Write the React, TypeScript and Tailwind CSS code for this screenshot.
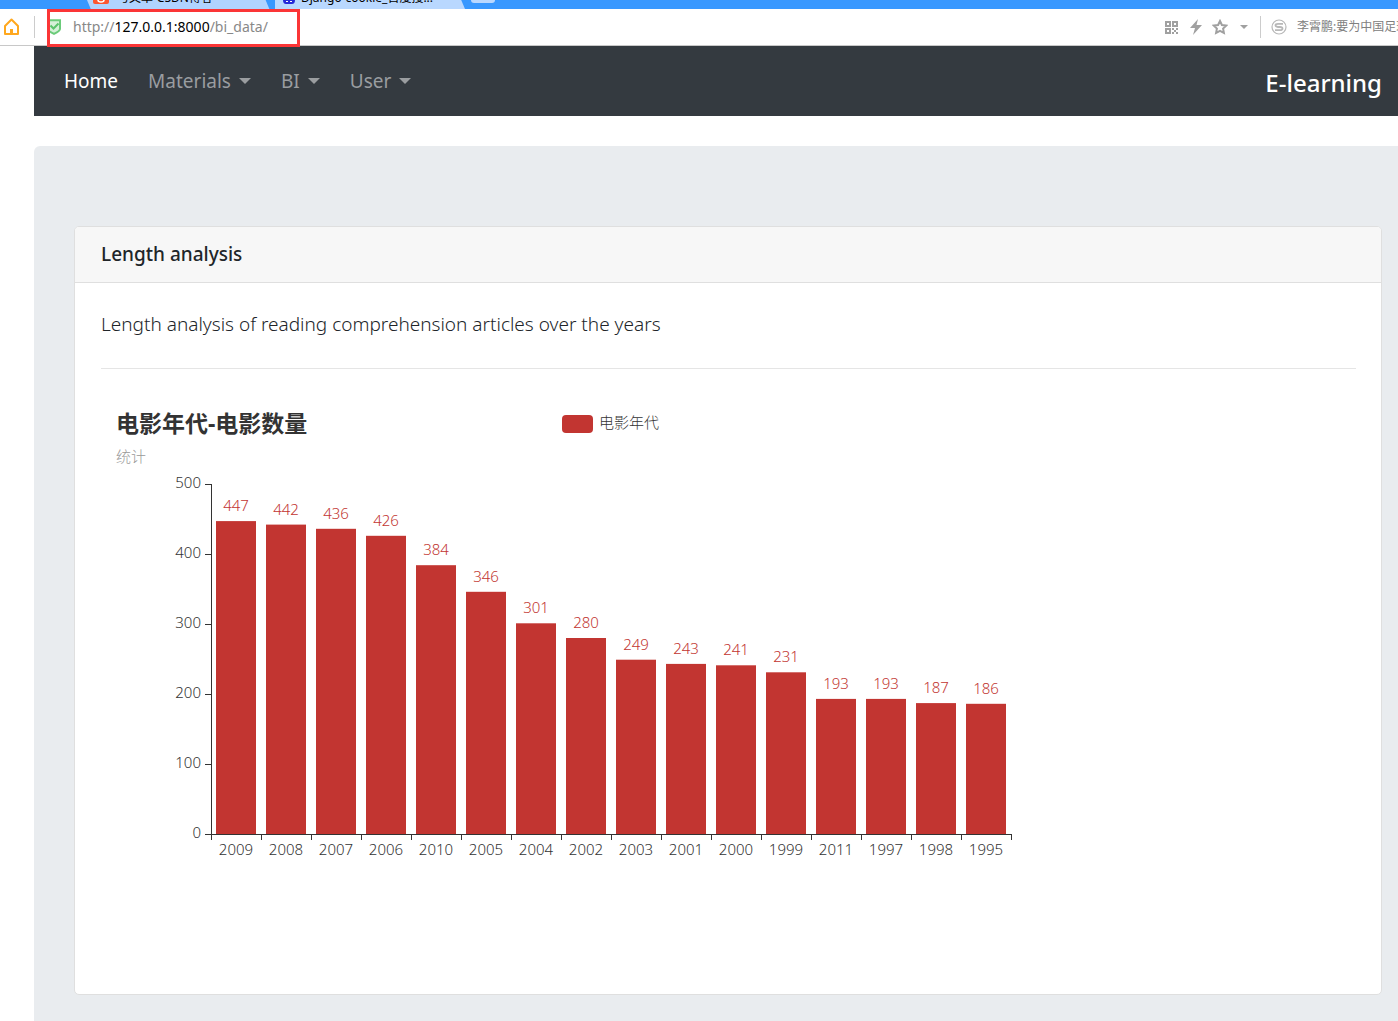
import { useId } from 'react'

const films = [
  { year: '2009', count: 447 },
  { year: '2008', count: 442 },
  { year: '2007', count: 436 },
  { year: '2006', count: 426 },
  { year: '2010', count: 384 },
  { year: '2005', count: 346 },
  { year: '2004', count: 301 },
  { year: '2002', count: 280 },
  { year: '2003', count: 249 },
  { year: '2001', count: 243 },
  { year: '2000', count: 241 },
  { year: '1999', count: 231 },
  { year: '2011', count: 193 },
  { year: '1997', count: 193 },
  { year: '1998', count: 187 },
  { year: '1995', count: 186 },
]

const ticks = [0, 100, 200, 300, 400, 500]

// plot area inside the 1000x500 chart
const left = 100
const bottom = 425
const step = 50
const scale = 0.7

const TabStrip = () => (
  <div className="flex h-[9px] overflow-hidden bg-[#3898ff] pl-[87px] text-xs leading-4">
    <button className="flex h-[9px] w-[188px] items-start gap-2 overflow-hidden bg-[#b0d3ff] pl-1.5 text-black [clip-path:polygon(0_0,95%_0,97%_100%,2%_100%)]">
      <svg className="h-[5px] w-4 shrink-0" viewBox="0 0 16 5">
        <path d="M0 0h16v2q0 2-2 2H2Q0 4 0 2z" fill="#fc5531" />
        <path d="M5 0q0 2 3 2t3-2" fill="none" stroke="#fff" strokeWidth="1.5" />
      </svg>
      <span className="-mt-2.5">与文章-CSDN博客</span>
    </button>
    <button className="flex h-[9px] w-[190px] items-start gap-1 overflow-hidden bg-[#b9d8ff] pl-1.5 text-black [clip-path:polygon(0_0,98%_0,100%_100%,0_100%)]">
      <svg className="h-[4px] w-4 shrink-0" viewBox="0 0 16 4">
        <path d="M2 0h12q0 4-3 4H5Q2 4 2 0z" fill="#2529d8" />
        <path d="M5 1h2v1H5zM9 1h2v1H9z" fill="#fff" />
      </svg>
      <span className="-mt-2.5">Django-cookie_百度搜...</span>
    </button>
    <span className="ml-1.5 h-[3px] w-6 rounded-b-sm bg-[#b9d8ff]" />
  </div>
)

const AddressBar = () => (
  <div className="flex h-[37px] items-center border-b border-[#c8c8c8] bg-white">
    <button className="ml-[3px] shrink-0" aria-label="Home page">
      <svg className="h-[18px] w-[17px]" viewBox="0 0 17 18">
        <path
          d="M2 16V8L8.500 1.500 15 8v8z"
          fill="none"
          stroke="#ffa81f"
          strokeWidth="2"
          strokeLinejoin="round"
        />
        <path d="M7 11h3v5H7z" fill="#ffa81f" />
      </svg>
    </button>
    <span className="ml-3.5 h-[22px] w-px shrink-0 bg-[#ccc]" />
    <div className="relative ml-3 flex h-[37px] w-[253px] shrink-0 items-center">
      <svg className="h-4 w-[15px] shrink-0" viewBox="0 0 15 16">
        <path
          d="M-4 1.200H13V10q0 2-6 4.800Q1 12 1 10V1.200z"
          fill="#d5f1d8"
          stroke="#6bcb7a"
          strokeWidth="2"
        />
        <path d="M3.500 6.500l3 3 5-5" fill="none" stroke="#5ac36b" strokeWidth="2" />
      </svg>
      <p className="ml-[11px] text-sm text-[#888]">
        http://<span className="text-black">127.0.0.1:8000</span>/bi_data/
      </p>
      <span className="absolute top-0 left-0 h-[38px] w-full border-3 border-[#fb3536]" />
    </div>
    <div className="ml-auto flex shrink-0 items-center text-[#a0a0a0]">
      <button aria-label="QR code">
        <svg className="h-[13px] w-[13px]" viewBox="0 0 13 13">
          <path
            d="M1 1h4v4H1zM8 1h4v4H8zM1 8h4v4H1z"
            fill="none"
            stroke="currentColor"
            strokeWidth="2"
          />
          <path
            d="M7 7h2v2H7zM9 9h2v2H9zM11 7h2v2h-2zM7 11h2v2H7zM11 11h2v2h-2z"
            fill="currentColor"
          />
        </svg>
      </button>
      <button className="ml-3" aria-label="Speed mode">
        <svg className="h-4 w-3" viewBox="0 0 12 16">
          <path d="M8 0L0 9h5L3 16l9-10H6.500z" fill="currentColor" />
        </svg>
      </button>
      <button className="ml-2.5" aria-label="Favourite">
        <svg className="h-4 w-4" viewBox="0 0 16 16">
          <path
            d="M8 2l1.900 4 4.300.6-3.100 3 .8 4.300L8 11.800l-3.900 2.100.8-4.300-3.100-3L6.100 6z"
            fill="none"
            stroke="currentColor"
            strokeWidth="2"
          />
        </svg>
      </button>
      <button className="ml-3" aria-label="More">
        <svg className="h-1 w-2" viewBox="0 0 8 4">
          <path d="M0 0h8L4 4z" fill="currentColor" />
        </svg>
      </button>
      <span className="ml-3 h-[22px] w-px bg-[#ccc]" />
      <svg className="ml-2.5 h-4 w-4" viewBox="0 0 16 16">
        <circle cx="8" cy="8" r="7" fill="none" stroke="#b8b8b8" strokeWidth="1.200" />
        <path
          d="M12 4.800H7Q4.500 4.800 4.500 6.300T7 8h2q2.500 0 2.500 1.600T9 11.200H4"
          fill="none"
          stroke="#b8b8b8"
          strokeWidth="1.800"
        />
      </svg>
      <span className="ml-2.5 w-[101px] overflow-hidden text-xs whitespace-nowrap text-[#808080]">
        李霄鹏:要为中国足球
      </span>
    </div>
  </div>
)

const NavMenu = ({ label }: { label: string }) => (
  <button className="flex items-center gap-2 text-[#9a9da0]">
    {label}
    <svg className="h-1.5 w-3" viewBox="0 0 12 6">
      <path d="M0 0h12L6 6z" fill="currentColor" />
    </svg>
  </button>
)

const BarChart = () => {
  const titleId = useId()

  return (
    <svg
      className="ml-2.5 h-[500px] w-[1000px] max-w-none font-light"
      viewBox="0 0 1000 500"
      role="img"
      aria-labelledby={titleId}
    >
      <text id={titleId} x="5" y="23" fontSize="23" fontWeight="700" fill="#333">
        电影年代-电影数量
      </text>
      <text x="5" y="53" fontSize="15" fill="#999">
        统计
      </text>
      <rect x="451" y="6" width="31" height="18" rx="4" fill="#c23531" />
      <text x="488" y="19" fontSize="15" fill="#333">
        电影年代
      </text>
      {ticks.map((tick) => (
        <g key={tick} fill="#333">
          <rect x={left - 6} y={bottom - tick * scale} width="6" height="1" />
          <text x="90" y={bottom - tick * scale + 4} fontSize="15" textAnchor="end">
            {tick}
          </text>
        </g>
      ))}
      {films.map((film, i) => {
        const x = left + i * step
        const top = bottom - film.count * scale
        return (
          <g key={film.year}>
            <rect x={x + 5} y={top} width="40" height={film.count * scale} fill="#c23531" />
            <text x={x + 25} y={top - 10} fontSize="15" textAnchor="middle" fill="#c23531">
              {film.count}
            </text>
            <rect x={x} y={bottom} width="1" height="6" fill="#333" />
            <text x={x + 25} y={bottom + 21} fontSize="15" textAnchor="middle" fill="#333">
              {film.year}
            </text>
          </g>
        )
      })}
      <rect x="900" y={bottom} width="1" height="6" fill="#333" />
      <rect x={left} y="75" width="1" height="350" fill="#333" />
      <rect x={left} y={bottom} width="801" height="1" fill="#333" />
    </svg>
  )
}

const App = () => {
  return (
    <div className="min-h-screen overflow-hidden bg-white font-['Noto_Sans','Noto_Sans_CJK_SC',sans-serif]">
      <TabStrip />
      <AddressBar />
      <div className="ml-[34px]">
        <nav className="flex h-[70px] items-center gap-[30px] bg-[#343a40] pr-4 pl-[30px] text-[19px]">
          <a className="text-white" href="#home">
            Home
          </a>
          <NavMenu label="Materials" />
          <NavMenu label="BI" />
          <NavMenu label="User" />
          <a className="ml-auto pt-1 text-2xl font-medium text-white" href="#brand">
            E-learning
          </a>
        </nav>
        <main className="mt-[30px] rounded-tl-md bg-[#e9ecef] pt-20 pr-4 pb-[26px] pl-10">
          <section className="rounded-[5px] border border-[#dfdfdf] bg-white">
            <h5 className="flex h-14 items-center rounded-t-[4px] border-b border-[#dfdfdf] bg-[#f7f7f7] px-[26px] text-[19px] font-medium text-[#212529]">
              Length analysis
            </h5>
            <div className="px-[25px] pt-[26px] pb-[85px] pl-[26px]">
              <p className="text-[19px] leading-[30px] font-light text-[#212529]">
                Length analysis of reading comprehension articles over the years
              </p>
              <hr className="mt-[29px] mb-10 border-[#e5e5e5]" />
              <BarChart />
            </div>
          </section>
        </main>
      </div>
    </div>
  )
}

export default App
